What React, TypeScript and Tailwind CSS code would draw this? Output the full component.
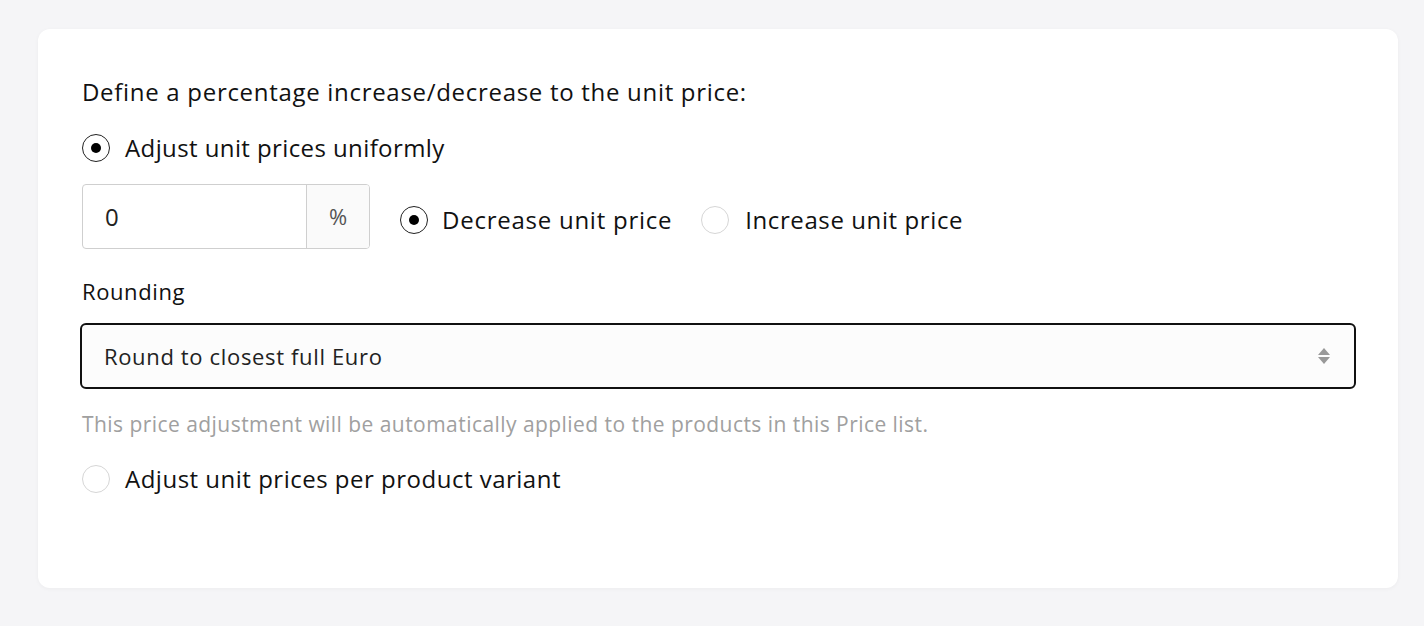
import React from 'react';

function Radio({ checked }: { checked?: boolean }) {
  return (
    <span
      className={`flex h-[28px] w-[28px] shrink-0 items-center justify-center rounded-full border bg-white ${
        checked ? 'border-[#222]' : 'border-[#d6d6d6]'
      }`}
    >
      {checked && <span className="h-[10px] w-[10px] rounded-full bg-black" />}
    </span>
  );
}

export default function App() {
  return (
    <div
      className="min-h-screen w-full bg-[#f5f5f7] pl-[38px] pr-[26px] pt-[29px] text-[#111]"
      style={{ fontFamily: '"Open Sans", sans-serif' }}
    >
      <div className="h-[559px] rounded-[12px] bg-white pl-[44px] pr-[42px] pt-[47px] shadow-[0_1px_4px_rgba(0,0,0,0.04)]">
        <p className="text-[24px] leading-[32px] tracking-[0.7px]">
          Define a percentage increase/decrease to the unit price:
        </p>

        <label className="mt-[24px] flex items-center gap-[15px]">
          <Radio checked />
          <span className="text-[24px] leading-[32px] tracking-[0.4px]">Adjust unit prices uniformly</span>
        </label>

        <div className="mt-[20px] flex items-center">
          <div className="flex h-[65px] w-[288px] overflow-hidden rounded-[4px] border border-[#cfcfcf]">
            <div className="flex flex-1 items-center pl-[22px] text-[24px] text-[#222]">0</div>
            <div className="flex w-[63px] items-center justify-center border-l border-[#cfcfcf] bg-[#fafafa] text-[22px] text-[#555]">
              %
            </div>
          </div>
          <label className="ml-[30px] mt-[6px] flex items-center gap-[14px]">
            <Radio checked />
            <span className="text-[24px] leading-[32px] tracking-[0.75px]">Decrease unit price</span>
          </label>
          <label className="ml-[29px] mt-[6px] flex items-center gap-[16px]">
            <Radio />
            <span className="text-[24px] leading-[32px] tracking-[0.6px]">Increase unit price</span>
          </label>
        </div>

        <p className="mt-[26px] text-[22px] leading-[32px] tracking-[0.6px]">Rounding</p>

        <div className="mt-[16px] -ml-[2px] flex h-[66px] items-center justify-between rounded-[6px] border-2 border-[#111] bg-[#fcfcfc] pl-[22px] pr-[22px]">
          <span className="text-[22px] tracking-[0.65px] text-[#222]">Round to closest full Euro</span>
          <svg width="16" height="20" viewBox="0 0 16 20">
            <path d="M8 2 L14 9 H2 Z" fill="#999" />
            <path d="M2 11 H14 L8 18 Z" fill="#999" />
          </svg>
        </div>

        <p className="mt-[19px] text-[21px] leading-[32px] tracking-[0.45px] text-[#a0a0a0]">
          This price adjustment will be automatically applied to the products in this Price list.
        </p>

        <label className="mt-[23px] flex items-center gap-[15px]">
          <Radio />
          <span className="text-[24px] leading-[32px] tracking-[0.5px]">Adjust unit prices per product variant</span>
        </label>
      </div>
    </div>
  );
}
